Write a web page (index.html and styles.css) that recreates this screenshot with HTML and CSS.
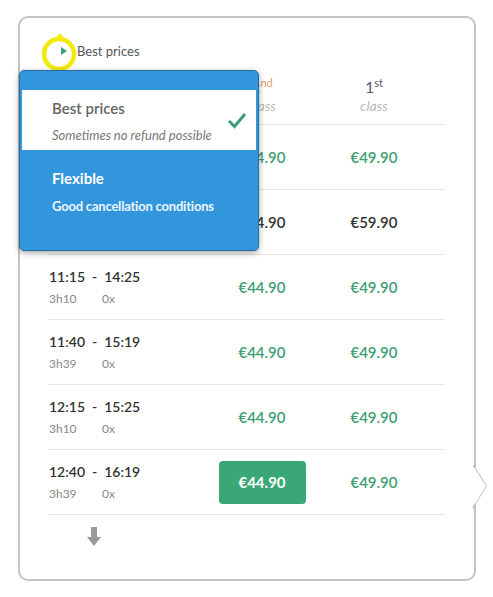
FILE: index.html
```html
<!DOCTYPE html>
<html>
<head>
<meta charset="utf-8">
<link rel="stylesheet" href="styles.css">
</head>
<body>
<div class="card">
  <div class="toggle"><span class="tri"></span><span class="toggle-label">Best prices</span></div>
  <svg class="ring" width="44" height="44" viewBox="0 0 44 44"><circle cx="20" cy="23" r="15" fill="none" stroke="#f2ea0c" stroke-width="4.5"/><circle cx="21" cy="6" r="2.8" fill="#f2ea0c"/></svg>

  <div class="table">
    <div class="row head">
      <div></div>
      <div class="col-h"><div class="num second">2<sup>nd</sup></div><div class="cls">class</div></div>
      <div class="col-h"><div class="num">1<sup>st</sup></div><div class="cls">class</div></div>
    </div>
    <div class="row">
      <div class="time"><div class="hours">10:15  -  13:25</div><div class="sub"><span class="dur">3h10</span><span>0x</span></div></div>
      <div class="price">€44.90</div>
      <div class="price">€49.90</div>
    </div>
    <div class="row">
      <div class="time"><div class="hours">10:40  -  14:19</div><div class="sub"><span class="dur">3h39</span><span>0x</span></div></div>
      <div class="price dark">€44.90</div>
      <div class="price dark">€59.90</div>
    </div>
    <div class="row">
      <div class="time"><div class="hours">11:15  -  14:25</div><div class="sub"><span class="dur">3h10</span><span>0x</span></div></div>
      <div class="price">€44.90</div>
      <div class="price">€49.90</div>
    </div>
    <div class="row">
      <div class="time"><div class="hours">11:40  -  15:19</div><div class="sub"><span class="dur">3h39</span><span>0x</span></div></div>
      <div class="price">€44.90</div>
      <div class="price">€49.90</div>
    </div>
    <div class="row">
      <div class="time"><div class="hours">12:15  -  15:25</div><div class="sub"><span class="dur">3h10</span><span>0x</span></div></div>
      <div class="price">€44.90</div>
      <div class="price">€49.90</div>
    </div>
    <div class="row">
      <div class="time"><div class="hours">12:40  -  16:19</div><div class="sub"><span class="dur">3h39</span><span>0x</span></div></div>
      <div class="price"><span class="btn">€44.90</span></div>
      <div class="price">€49.90</div>
    </div>
  </div>

  <div class="more">
    <svg width="14" height="20" viewBox="0 0 14 20"><path d="M4 0 H10 V10 H14 L7 19 L0 10 H4 Z" fill="#999"/></svg>
  </div>

  <svg class="pointer" width="18" height="44" viewBox="0 0 18 44"><path d="M3 0 V2 L15 21 L3 40 V44" fill="#fff" stroke="#c4c4c4" stroke-width="2"/><path d="M0 2 L3 2 L15 21 L3 40 L0 40 Z" fill="#fff"/></svg>

  <div class="dropdown">
    <div class="opt opt-active">
      <div class="opt-title">Best prices</div>
      <div class="opt-desc">Sometimes no refund possible</div>
      <svg class="check" width="20" height="18" viewBox="0 0 20 18"><path d="M2 10 L7.5 15.5 L18 3" fill="none" stroke="#3d9e74" stroke-width="3"/></svg>
    </div>
    <div class="opt opt-blue">
      <div class="opt-title">Flexible</div>
      <div class="opt-desc">Good cancellation conditions</div>
    </div>
  </div>
</div>
</body>
</html>
```

FILE: styles.css
```css
* { box-sizing: border-box; }
html, body { margin: 0; padding: 0; background: #fff; }
body { font-family: Lato, "Open Sans", sans-serif; color: #333; }

.card {
  position: relative;
  margin: 16px 0 0 18px;
  width: 458px;
  height: 565px;
  border: 2px solid #c4c4c4;
  border-radius: 10px;
  padding: 23px 29px 0 29px;
}

.toggle {
  height: 20px;
  display: flex;
  align-items: center;
  padding-left: 12px;
}
.tri {
  width: 0; height: 0;
  border-top: 4px solid transparent;
  border-bottom: 4px solid transparent;
  border-left: 6px solid #3d9e74;
  margin-right: 10px;
}
.toggle-label { font-size: 13px; color: #555; }

.ring { position: absolute; left: 19px; top: 13px; }

.table { width: 396px; }
.row {
  display: grid;
  grid-template-columns: 169px 88px 136px;
  height: 65px;
  border-bottom: 1px solid #e6e6e6;
}
.row.head { height: 64px; padding-top: 16px; }
.col-h { text-align: center; }
.num { font-size: 16px; line-height: 20px; color: #55587a; }
.num.second { color: #d9a066; }
.num sup { font-size: 11px; line-height: 0; vertical-align: 6px; }
.cls { font-size: 14px; line-height: 18px; font-style: italic; color: #b8b8b8; }

.time { padding-top: 12px; }
.hours { font-size: 14px; line-height: 20px; font-weight: 600; color: #333; margin-bottom: 4px; white-space: pre; }
.sub { font-size: 12px; line-height: 16px; color: #888; display: flex; }
.dur { width: 53px; }

.price {
  display: flex; align-items: center; justify-content: center;
  font-size: 15px; font-weight: 600; color: #3d9e74;
}
.price.dark { color: #333; }
.btn {
  width: 87px; height: 43px;
  background: #3aa876; color: #fff;
  font-weight: 700;
  border-radius: 4px;
  display: flex; align-items: center; justify-content: center;
}

.more { height: 30px; padding: 12px 0 0 38px; }

.pointer { position: absolute; right: -15px; top: 447px; }

.dropdown {
  position: absolute;
  left: -1px; top: 52px;
  width: 240px; height: 181px;
  background: #3296dc;
  border: 1px solid #2b6b9c;
  border-radius: 5px;
  box-shadow: 0 2px 6px rgba(0,0,0,0.35);
  padding: 19px 2px 0 2px;
}
.opt { position: relative; padding-left: 30px; }
.opt-active { background: #fff; height: 60px; padding-top: 8px; }
.opt-active .opt-title { font-size: 15px; line-height: 20px; font-weight: 600; color: #666; }
.opt-active .opt-desc { font-size: 13px; line-height: 16px; font-style: italic; color: #777; margin-top: 9px; }
.opt-blue { padding-top: 18px; }
.opt-blue .opt-title { font-size: 15px; line-height: 20px; font-weight: 700; color: #fff; }
.opt-blue .opt-desc { font-size: 13px; line-height: 16px; font-weight: 700; color: #eaf4fc; margin-top: 10px; letter-spacing: -0.2px; }
.check { position: absolute; left: 205px; top: 21px; }
```
